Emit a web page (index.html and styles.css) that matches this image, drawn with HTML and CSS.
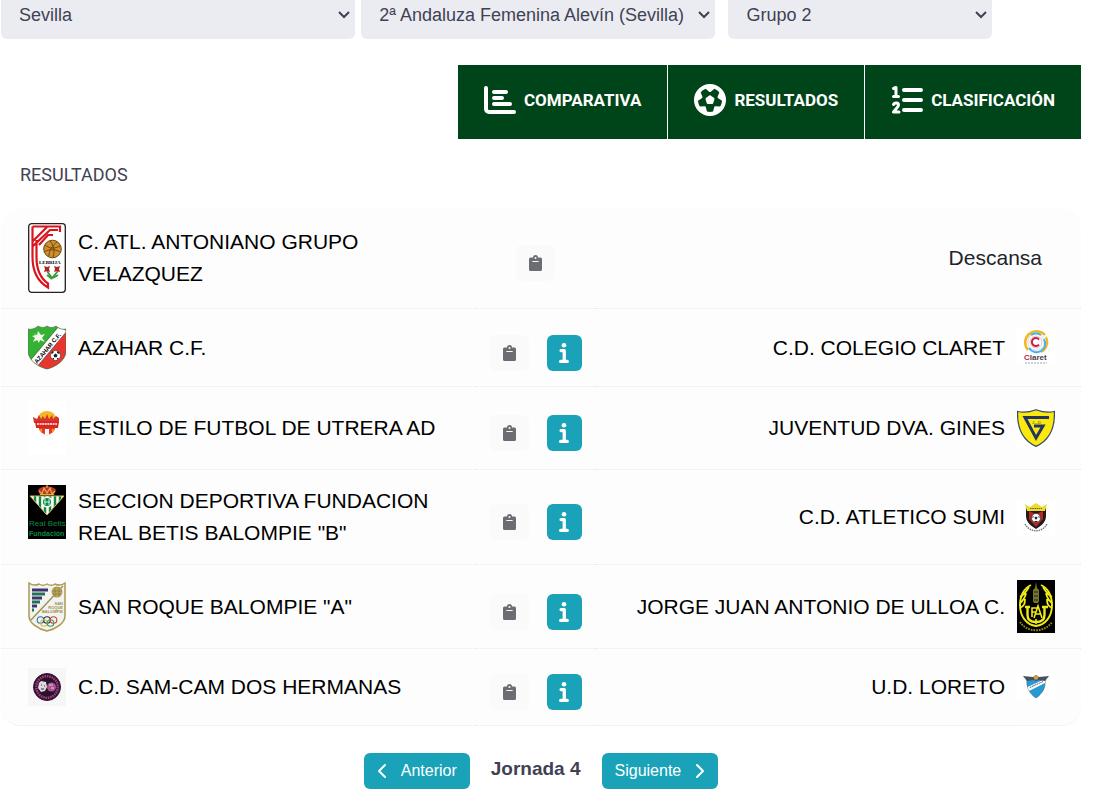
FILE: index.html
```html
<!DOCTYPE html>
<html lang="es">
<head>
    <meta charset="UTF-8">
    <meta name="viewport" content="width=device-width, initial-scale=1.0">
    <title>Resultados</title>
    <link rel="stylesheet" href="styles.css">
</head>
<body>
    <svg class="sprite" aria-hidden="true">
        <symbol id="i-clip" viewBox="0 0 13 16">
            <path fill-rule="evenodd" d="M1.500 2.500H4a2.500 2.500 0 0 1 5 0h2.500A1.500 1.500 0 0 1 13 4v10.500a1.500 1.500 0 0 1-1.500 1.500h-10A1.500 1.500 0 0 1 0 14.500V4a1.500 1.500 0 0 1 1.500-1.500zM6.500 2a1 1 0 1 0 0 2a1 1 0 0 0 0-2zM3.700 6a.5.5 0 0 0 0 1h5.600a.5.5 0 0 0 0-1z"/>
        </symbol>
        <symbol id="i-info" viewBox="0 0 10 20">
            <circle cx="5" cy="2.300" r="2.300"/>
            <path d="M2 6H5.300a1.600 1.600 0 0 1 1.600 1.600V16.800h1.400a1.600 1.600 0 0 1 0 3.200H1.600a1.600 1.600 0 0 1 0-3.200h2V9.200H2A1.600 1.600 0 0 1 2 6z"/>
        </symbol>
    </svg>

    <div class="container">
        <form class="filters">
            <select class="filter" aria-label="Provincia"><option>Sevilla</option></select>
            <select class="filter filter-cat" aria-label="Categoría"><option>2ª Andaluza Femenina Alevín (Sevilla)</option></select>
            <select class="filter filter-group" aria-label="Grupo"><option>Grupo 2</option></select>
        </form>

        <nav class="tabs">
            <a href="#comparativa" class="tab">
                <svg class="tab-icon" viewBox="0 0 32 32" fill="none" stroke="#fff" stroke-linecap="round" stroke-linejoin="round" stroke-width="4">
                    <path d="M2 4v21a3 3 0 0 0 3 3h25M10 8h12M10 14h8M10 20h16"/>
                </svg>
                Comparativa
            </a>
            <a href="#resultados" class="tab">
                <svg class="tab-icon" viewBox="0 0 512 512" fill="#fff">
                    <path d="M417.300 360.100l-71.600-4.800c-5.200-.3-10.300 1.100-14.500 4.200s-7.200 7.400-8.400 12.500l-17.600 69.600C289.500 445.800 273 448 256 448s-33.500-2.200-49.200-6.400L189.200 372c-1.300-5-4.300-9.400-8.400-12.500s-9.300-4.500-14.500-4.200l-71.600 4.800c-17.600-27.200-28.500-59.200-30.400-93.600L125 228.300c4.400-2.800 7.600-7 9.200-11.900s1.400-10.200-.5-15l-26.700-66.600C128 109.200 155.300 89 186.900 76.900l55.200 46c4 3.300 9 5.100 14.100 5.100s10.200-1.800 14.100-5.100l55.200-46c31.600 12.100 58.900 32.300 79.900 57.900l-26.700 66.600c-1.900 4.800-2.100 10.100-.5 15s4.900 9.100 9.200 11.900l60.700 38.200c-1.900 34.400-12.800 66.400-30.400 93.600zM256 512A256 256 0 1 0 256 0a256 256 0 1 0 0 512zm14.100-325.700c-8.400-6.100-19.800-6.100-28.200 0L194 221c-8.400 6.100-11.900 16.900-8.700 26.800l18.300 56.300c3.200 9.900 12.400 16.600 22.800 16.600h59.200c10.400 0 19.600-6.700 22.800-16.600l18.300-56.300c3.200-9.900-.3-20.700-8.700-26.800l-47.900-34.800z"/>
                </svg>
                Resultados
            </a>
            <a href="#clasificacion" class="tab">
                <svg class="tab-icon" viewBox="0 0 32 32" fill="none" stroke="#fff" stroke-linecap="round" stroke-linejoin="round">
                    <path stroke-width="4" d="M13 6h17M13 16h17M13 26h17"/>
                    <path stroke-width="3" d="M2.500 4.500L5 3.500v9M2.500 12.500h5M2.500 20.500c1-2 5-2 5 .5 0 2-3 4-5 7h5.500"/>
                </svg>
                Clasificación
            </a>
        </nav>

        <h2 class="title">Resultados</h2>

        <table class="results">
            <tbody>
                <tr>
                    <td class="home">
                        <div class="team team-long">
                            <svg class="crest" viewBox="0 0 38 70">
                                <rect x=".7" y=".7" width="36.600" height="68.600" rx="3" fill="#fff" stroke="#222" stroke-width="1.300"/>
                                <g fill="none" stroke="#d9141c" stroke-width="2.200">
                                    <path d="M4.500 3.500H32V9M4.500 3.500V34c0 16 6 25 15.500 30.500v-4C12 55 8.500 47 8.500 34V17M5 18L19 4M5 23L22 7h8M11 22l9-10h5"/>
                                </g>
                                <circle cx="24.500" cy="26" r="8.800" fill="#cf8f2c" stroke="#6b4510"/>
                                <path d="M17 22c5 4 9 4 15 1M16 29c5-3 11-3 16 0M22 18c4 5 5 10 3 16M29 19c-5 4-8 8-8 14" fill="none" stroke="#65410f" stroke-width=".9"/>
                                <text x="11" y="41" class="crest-serif">LEBRIJA</text>
                                <path d="M19 48l5 7 6-7M24 56l-5-4M25 55l5-3" fill="none" stroke="#3b9b3c" stroke-width="1.800"/>
                                <path d="M16 43l3 1 3-1-1 3 1 3-3-1-3 1 1-3zM26 43l3 1 3-1-1 3 1 3-3-1-3 1 1-3z" fill="#b51f27"/>
                            </svg>
                            <span>C. ATL. ANTONIANO GRUPO VELAZQUEZ</span>
                        </div>
                    </td>
                    <td>
                        <div class="actions">
                            <button type="button" class="btn-clip" aria-label="Acta"><svg><use href="#i-clip"/></svg></button>
                        </div>
                    </td>
                    <td class="away"><div class="team rest"><span>Descansa</span></div></td>
                </tr>
                <tr>
                    <td class="home">
                        <div class="team">
                            <svg class="crest" viewBox="0 0 38 47">
                                <clipPath id="azahar"><path d="M0 5C4 6 8 4 10 2c4 2 6 2 9 0 3 2 6 2 9 0 2 2 6 4 10 3v22c0 9-10 16-19 18C10 43 0 36 0 27z"/></clipPath>
                                <g clip-path="url(#azahar)">
                                    <rect width="38" height="47" fill="#33b233"/>
                                    <path d="M38 5v42H2L1 42z" fill="#e8352d"/>
                                    <path d="M1 38L31 2l8 5L8 44z" fill="#fff" stroke="#333" stroke-width=".6"/>
                                </g>
                                <path d="M5 9l4 2 1-4 3 4 4-1-3 4 3 4-5-2-1 3-2-3-4 2 2-4-3-2 4-1z" fill="#f3fbe8"/>
                                <text transform="translate(9 40) rotate(-50)" class="crest-sans">AZAHAR C.F.</text>
                                <circle cx="27.500" cy="31.500" r="5" fill="#fff" stroke="#333" stroke-width=".6"/>
                                <path d="M27.500 29.500l2 1.500-.7 2.300h-2.600l-.7-2.300zM23 29l2-2 1 1-2 2zM29 27l3 2-1 1-2-1zM31 34l-2 2v-2zM24 34l2 2v-2z" fill="#222"/>
                                <path d="M0 5C4 6 8 4 10 2c4 2 6 2 9 0 3 2 6 2 9 0 2 2 6 4 10 3v22c0 9-10 16-19 18C10 43 0 36 0 27z" fill="none" stroke="#59684f" stroke-width=".7"/>
                            </svg>
                            <span>AZAHAR C.F.</span>
                        </div>
                    </td>
                    <td>
                        <div class="actions">
                            <button type="button" class="btn-clip" aria-label="Acta"><svg><use href="#i-clip"/></svg></button>
                            <button type="button" class="btn-info" aria-label="Información"><svg><use href="#i-info"/></svg></button>
                        </div>
                    </td>
                    <td class="away">
                        <div class="team">
                            <span>C.D. COLEGIO CLARET</span>
                            <svg class="crest" viewBox="0 0 38 37">
                                <rect width="38" height="37" fill="#fff"/>
                                <g fill="none">
                                    <circle cx="19" cy="13" r="8.300" stroke="#e3e5ec" stroke-width="1.500"/>
                                    <path d="M11 21A11 11 0 1 1 28 6" stroke="#f5b51f" stroke-width="2.400"/>
                                    <path d="M29 8a11 11 0 0 1-5 15" stroke="#f5b51f" stroke-width="2"/>
                                    <path d="M27 10a8.500 8.500 0 0 1-15 9M14 6a8.500 8.500 0 0 1 10 0" stroke="#45b4e4" stroke-width="2"/>
                                    <circle cx="19" cy="13" r="6" stroke="#d9929f" stroke-width=".6"/>
                                    <path d="M22 10.500a4 4 0 1 0 0 5" stroke="#c8203c" stroke-width="2"/>
                                </g>
                                <text x="7" y="31" class="crest-claret"><tspan fill="#c8203c">C</tspan>laret</text>
                                <path d="M8 34h22" stroke="#b9c6cc" stroke-width="1.500" stroke-dasharray="2 1"/>
                            </svg>
                        </div>
                    </td>
                </tr>
                <tr>
                    <td class="home">
                        <div class="team">
                            <svg class="crest" viewBox="0 0 38 52">
                                <rect width="38" height="52" fill="#fff"/>
                                <path d="M10 17a9 8 0 0 1 18 0z" fill="#f5b728"/>
                                <path d="M5 15l4 2 2-4 2 4 2-3 2 3 2-5 2 5 3-4 1 4 3-3 3 2v5H6z" fill="#d3392b"/>
                                <path d="M7 19h24l-1 7H8z" fill="#dc2420"/>
                                <path d="M9 22h20" stroke="#fff" stroke-width="1.300" stroke-dasharray="2 .6"/>
                                <path d="M11 26h16c0 4-4 5-8 8-4-3-8-4-8-8z" fill="#e5392d"/>
                                <path d="M17 27h4v6l-2 1-2-1z" fill="#fff"/>
                                <path d="M13 27v3M25 27v3" stroke="#f5b728" stroke-width="1.500"/>
                            </svg>
                            <span>ESTILO DE FUTBOL DE UTRERA AD</span>
                        </div>
                    </td>
                    <td>
                        <div class="actions">
                            <button type="button" class="btn-clip" aria-label="Acta"><svg><use href="#i-clip"/></svg></button>
                            <button type="button" class="btn-info" aria-label="Información"><svg><use href="#i-info"/></svg></button>
                        </div>
                    </td>
                    <td class="away">
                        <div class="team">
                            <span>JUVENTUD DVA. GINES</span>
                            <svg class="crest" viewBox="0 0 38 38">
                                <rect width="38" height="38" fill="#fff"/>
                                <path d="M.6 2.500C7 4 13 3 19 .7 25 3 31 4 37.400 2.500 38 18 33 31 19 37.400 5 31 0 18 .6 2.500z" fill="#fbe90d" stroke="#31476e" stroke-width="1.200"/>
                                <path d="M32 8.500H8L19 29l7-12h-9" fill="none" stroke="#24365f" stroke-width="3"/>
                                <text x="15" y="14.500" class="crest-gines">J—D</text>
                            </svg>
                        </div>
                    </td>
                </tr>
                <tr>
                    <td class="home">
                        <div class="team team-long">
                            <svg class="crest" viewBox="0 0 38 54">
                                <rect width="38" height="54" fill="#000"/>
                                <path d="M12 10l-2-5c2-3 5-3 9-4 4 1 7 1 9 4l-2 5z" fill="#c03030"/>
                                <path d="M12 9.500h14M11 6l3 3 2-6 3 5 3-5 2 6 3-3M19 0v3" fill="none" stroke="#dfb43b" stroke-width="1.200"/>
                                <clipPath id="betis"><path d="M2 11h34L19 30z"/></clipPath>
                                <g clip-path="url(#betis)">
                                    <rect y="10" width="38" height="22" fill="#fff"/>
                                    <path d="M7 10v20M12 10v20M17 10v20M22 10v20M27 10v20M32 10v20" stroke="#0c8a43" stroke-width="2.500"/>
                                </g>
                                <path d="M2 11h34L19 30z" fill="none" stroke="#d4b34a"/>
                                <circle cx="19" cy="17" r="5.500" fill="#fff"/>
                                <circle cx="19" cy="17" r="4" fill="#0c8a43"/>
                                <path d="M17 14v6M21 14v6M16 17h6" stroke="#fff" stroke-width=".8"/>
                                <text x="1" y="41" class="crest-betis">Real Betis</text>
                                <text x="1" y="51" class="crest-betis crest-bold">Fundación</text>
                            </svg>
                            <span>SECCION DEPORTIVA FUNDACION REAL BETIS BALOMPIE "B"</span>
                        </div>
                    </td>
                    <td>
                        <div class="actions">
                            <button type="button" class="btn-clip" aria-label="Acta"><svg><use href="#i-clip"/></svg></button>
                            <button type="button" class="btn-info" aria-label="Información"><svg><use href="#i-info"/></svg></button>
                        </div>
                    </td>
                    <td class="away">
                        <div class="team">
                            <span>C.D. ATLETICO SUMI</span>
                            <svg class="crest" viewBox="0 0 38 37">
                                <rect width="38" height="37" fill="#fff"/>
                                <path d="M9 8h20v9c0 6-5 10-10 13C14 27 9 23 9 17z" fill="#231b1a"/>
                                <path d="M12 12l7 3 7-3v8l-7 8-7-8z" fill="#b62626"/>
                                <path d="M8 5l5 3 6-4 6 4 5-3-2 7H10z" fill="#eadb35"/>
                                <path d="M13 9.500h12" stroke="#6d651c" stroke-dasharray="1.500 .7"/>
                                <circle cx="19" cy="19" r="4.500" fill="#fff" stroke="#222" stroke-width=".6"/>
                                <path d="M19 17.500l1.500 1-.6 1.800h-1.800l-.6-1.800zM15 19l1-2 1 1zM23 19l-1-2-1 1zM17 22l1 1h2l1-1" fill="#222"/>
                                <path d="M8 25c5 9 17 9 22 0" fill="none" stroke="#777" stroke-width="1.400" stroke-dasharray="1.500 .8"/>
                            </svg>
                        </div>
                    </td>
                </tr>
                <tr>
                    <td class="home">
                        <div class="team">
                            <svg class="crest" viewBox="0 0 38 50">
                                <path d="M1 1c4 3 8 2 10 1 3 2 5 2 8 0 3 2 5 2 8 0 2 1 6 2 10-1v33c0 7-9 13-18 15C10 47 1 41 1 34z" fill="#f1f3f1" stroke="#ad9950" stroke-width="1.500"/>
                                <g stroke-width="3">
                                    <path d="M4 8h16M4 16h10M4 24h5" stroke="#3c346d"/>
                                    <path d="M4 12h13M4 20h8M4 28h2" stroke="#237258"/>
                                </g>
                                <path d="M3 38L35 4" stroke="#9e8d49" stroke-width="1.300"/>
                                <circle cx="29" cy="10" r="5.500" fill="#b6a360"/>
                                <path d="M24 9h10M25 12h8M27 5v10M31 5v10" stroke="#8e7b39" stroke-width=".7"/>
                                <g class="crest-roque">
                                    <text x="35" y="23">SAN</text>
                                    <text x="35" y="27">ROQUE</text>
                                    <text x="35" y="31">BALOMPIE</text>
                                </g>
                                <g fill="none" stroke-width="1.100">
                                    <circle cx="12.500" cy="38" r="3.300" stroke="#2d75a9"/>
                                    <circle cx="19" cy="38" r="3.300" stroke="#333"/>
                                    <circle cx="25.500" cy="38" r="3.300" stroke="#c94436"/>
                                    <circle cx="16" cy="41" r="3.300" stroke="#d9b749"/>
                                    <circle cx="22.500" cy="41" r="3.300" stroke="#3b9a5d"/>
                                </g>
                            </svg>
                            <span>SAN ROQUE BALOMPIE "A"</span>
                        </div>
                    </td>
                    <td>
                        <div class="actions">
                            <button type="button" class="btn-clip" aria-label="Acta"><svg><use href="#i-clip"/></svg></button>
                            <button type="button" class="btn-info" aria-label="Información"><svg><use href="#i-info"/></svg></button>
                        </div>
                    </td>
                    <td class="away">
                        <div class="team">
                            <span>JORGE JUAN ANTONIO DE ULLOA C.</span>
                            <svg class="crest" viewBox="0 0 38 53">
                                <rect width="38" height="53" fill="#000"/>
                                <g fill="none" stroke="#eeea16">
                                    <path d="M14 5C7 8 3 16 3 25c0 12 7 20 16 21 9-1 16-9 16-21 0-9-4-17-11-20" stroke-width="1.900"/>
                                    <path d="M12 7c-3 5-5 8-9 10M9 13c-1 5-2 7-6 10M8 19c0 5-1 7-5 9M26 7c3 5 5 8 9 10M29 13c1 5 2 7 6 10M30 19c0 5 1 7 5 9" stroke-width="1.800"/>
                                    <path d="M8 27h5M10.500 27v8c0 5 3 7 8.500 7s8.500-2 8.500-7v-8M25 27h6" stroke-width="2.400"/>
                                    <path d="M15 37V28h5M15 32h4M17 38l4-12 4 12M18 34h5M19 39v5" stroke-width="1.600"/>
                                </g>
                                <path d="M19 2l1 6 2 2v11l-1 2h-4l-1-2V10l2-2z" fill="#77752a"/>
                                <path d="M17 12h4M17 16h4M17 20h4" stroke="#222"/>
                                <path d="M3 42c7 11 25 11 32 0" fill="none" stroke="#8d8a17" stroke-width="2" stroke-dasharray="1.700 1"/>
                            </svg>
                        </div>
                    </td>
                </tr>
                <tr>
                    <td class="home">
                        <div class="team">
                            <svg class="crest" viewBox="0 0 38 38">
                                <rect width="38" height="38" fill="#f6f6f6"/>
                                <circle cx="19" cy="19" r="13.500" fill="#291329" stroke="#3c1838"/>
                                <circle cx="19" cy="19" r="10.800" fill="none" stroke="#a23b84" stroke-width="2.500" stroke-dasharray="1.600 .8"/>
                                <circle cx="19" cy="19" r="8.500" fill="#2b122b"/>
                                <path d="M11 15l2-2 5 1 1 5-2 4-4 1-3-4z" fill="#ded8de"/>
                                <path d="M13 17h1M16 18h1M13 21h3" stroke="#333"/>
                                <circle cx="23.500" cy="19" r="4.500" fill="#a55793"/>
                                <path d="M21 17h4M23 20h3" stroke="#e7cbe1"/>
                            </svg>
                            <span>C.D. SAM-CAM DOS HERMANAS</span>
                        </div>
                    </td>
                    <td>
                        <div class="actions">
                            <button type="button" class="btn-clip" aria-label="Acta"><svg><use href="#i-clip"/></svg></button>
                            <button type="button" class="btn-info" aria-label="Información"><svg><use href="#i-info"/></svg></button>
                        </div>
                    </td>
                    <td class="away">
                        <div class="team">
                            <span>U.D. LORETO</span>
                            <svg class="crest" viewBox="0 0 38 28">
                                <rect width="38" height="28" fill="#fff"/>
                                <path d="M10 6h18c1 9-3 15-9 19-6-4-10-10-9-19z" fill="#259ad3" stroke="#426378" stroke-width=".6"/>
                                <path d="M10.500 14L28 6v4l-16 8z" fill="#fff"/>
                                <path d="M13 14.500l13-6" stroke="#60717f" stroke-width="1.200" stroke-dasharray="1.300 .6"/>
                                <path d="M6 3l10 1 3-2 3 2 10-1-4 5-7-1-2 1-2-1-7 1z" fill="#46505f"/>
                                <circle cx="19" cy="4.500" r="2.300" fill="#d9994b"/>
                            </svg>
                        </div>
                    </td>
                </tr>
            </tbody>
        </table>

        <div class="pager">
            <button type="button" class="btn-page">
                <svg viewBox="0 0 10 16"><path d="M8 2L2 8l6 6"/></svg>
                Anterior
            </button>
            <strong class="round">Jornada 4</strong>
            <button type="button" class="btn-page">
                Siguiente
                <svg viewBox="0 0 10 16"><path d="M2 2l6 6-6 6"/></svg>
            </button>
        </div>
    </div>
</body>
</html>
```
FILE: styles.css
```css
* {
    box-sizing: border-box;
}

body {
    margin: 0;
    background-color: #fff;
    color: #3f4254;
    font-family: "Liberation Sans", Arial, sans-serif;
}

.sprite {
    display: none;
}

.container {
    padding: 0 28px 0 1px;
}

/* filters */
.filters {
    display: flex;
    gap: 6px;
    height: 39px;
    align-items: flex-end;
}

.filter {
    width: 32.8%;
    height: 48px;
    padding: 0 22px 0 18px;
    border: none;
    border-radius: 6px;
    background: #ebecf2 url("data:image/svg+xml,%3Csvg xmlns='http://www.w3.org/2000/svg' width='12' height='8'%3E%3Cpath d='M1 1l5 5 5-5' fill='none' stroke='%233f4254' stroke-width='2'/%3E%3C/svg%3E") no-repeat right 5px center;
    color: #3f4254;
    font-family: inherit;
    font-size: 18px;
    appearance: none;
}

.filter-cat {
    margin-right: 7px;
}

.filter-group {
    width: 24.4%;
}

/* tabs */
.tabs {
    display: flex;
    justify-content: flex-end;
    margin-top: 26px;
}

.tab {
    display: flex;
    align-items: center;
    gap: 8px;
    height: 74px;
    padding: 0 26px 4px;
    background-color: #004519;
    color: #fff;
    font-family: Roboto, "Liberation Sans", sans-serif;
    font-size: 17px;
    font-weight: bold;
    text-decoration: none;
    text-transform: uppercase;
}

.tab + .tab {
    border-left: 1px solid #fff;
}

.tab-icon {
    width: 32px;
    height: 32px;
}

.title {
    margin: 16px 0 14px 19px;
    font-family: Roboto, "Liberation Sans", sans-serif;
    font-size: 18px;
    font-weight: normal;
    line-height: 39px;
    text-transform: uppercase;
}

/* results */
.results {
    width: 100%;
    table-layout: fixed;
    border-collapse: separate;
    border-spacing: 0;
    border-radius: 20px;
    background-color: #fdfdfd;
    color: #000;
    font-size: 21px;
    line-height: 32px;
}

.results td {
    width: 11%;
    padding: 15px 0;
    border-bottom: 1px dotted #e8e8e8;
}

.results tr:last-child td:first-child {
    border-bottom-left-radius: 20px;
}

.results tr:last-child td:last-child {
    border-bottom-right-radius: 20px;
}

.results .home {
    width: 44%;
    padding-left: 27px;
    padding-right: 27px;
}

.results .away {
    width: 45%;
    padding-right: 26px;
}

.team {
    display: flex;
    align-items: center;
    gap: 12px;
}

.team-long .crest {
    align-self: flex-start;
}

.away .team {
    justify-content: flex-end;
}

.away .rest {
    padding-right: 13px;
    color: #212529;
}

.crest {
    flex: none;
    width: 38px;
}

.crest text {
    font-family: "Liberation Sans", sans-serif;
}

.crest .crest-serif {
    font-family: "Liberation Serif", serif;
    font-size: 5px;
    font-weight: bold;
}

.crest .crest-sans {
    font-size: 6px;
    font-weight: bold;
}

.crest .crest-claret {
    fill: #444;
    font-size: 8px;
    font-weight: bold;
}

.crest .crest-gines {
    fill: #24365f;
    font-size: 4px;
}

.crest .crest-betis {
    fill: #0c8a43;
    font-size: 8px;
}

.crest .crest-bold {
    font-size: 7px;
    font-weight: bold;
}

.crest-roque {
    fill: #9e8d49;
    font-size: 4px;
    font-weight: bold;
    text-anchor: end;
}

.actions {
    display: flex;
    justify-content: center;
    gap: 18px;
    padding-top: 10px;
}

.btn-clip,
.btn-info {
    display: flex;
    align-items: center;
    justify-content: center;
    width: 39px;
    height: 36px;
    padding: 0;
    border: none;
    border-radius: 6px;
    background-color: #fafafa;
    cursor: pointer;
}

.btn-clip svg {
    width: 13px;
    height: 16px;
    fill: #6c6d72;
}

.btn-info {
    width: 35px;
    background-color: #19a2b8;
}

.btn-info svg {
    width: 10px;
    height: 20px;
    fill: #fff;
}

/* pager */
.pager {
    display: flex;
    justify-content: center;
    gap: 21px;
    margin-top: 27px;
}

.btn-page {
    display: flex;
    align-items: center;
    gap: 14px;
    height: 36px;
    padding: 0 13px;
    border: none;
    border-radius: 6px;
    background-color: #19a2b8;
    color: #fff;
    font-family: inherit;
    font-size: 16px;
    cursor: pointer;
}

.btn-page svg {
    width: 10px;
    height: 16px;
    fill: none;
    stroke: #fff;
    stroke-width: 2;
    stroke-linecap: round;
    stroke-linejoin: round;
}

.round {
    font-size: 19px;
    line-height: 32px;
}
```
